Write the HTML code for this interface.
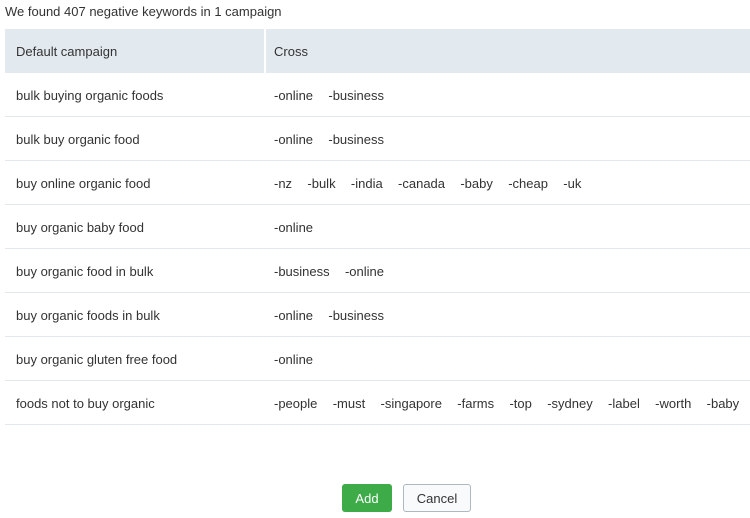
<!DOCTYPE html>
<html><head><style>
body{margin:0;width:750px;height:518px;background:#fff;font-family:"Liberation Sans",sans-serif;font-size:13px;color:#333;position:relative;overflow:hidden}
.t{position:absolute;left:5px;top:4px}
.tbl{position:absolute;left:5px;top:29px;width:745px}
.row{height:43px;border-bottom:1px solid #e2e8ec;position:relative}
.row div{position:absolute;top:1px;line-height:43px;white-space:pre}
.c1{left:11px}.c2{left:269px;word-spacing:1.5px}
.hd{background:#e3eaef;height:44px;border:none}
.hd .sep{position:absolute;left:259px;top:0;width:2px;height:44px;background:#fff}
.btn{position:absolute;top:484px;height:28px;line-height:30px;text-align:center;border-radius:3px;font-size:13px}
</style></head><body>
<div class="t">We found 407 negative keywords in 1 campaign</div>
<div class="tbl">
<div class="row hd"><div class="c1">Default campaign</div><span class="sep"></span><div class="c2">Cross</div></div>
<div class="row"><div class="c1">bulk buying organic foods</div><div class="c2">-online   -business</div></div>
<div class="row"><div class="c1">bulk buy organic food</div><div class="c2">-online   -business</div></div>
<div class="row"><div class="c1">buy online organic food</div><div class="c2">-nz   -bulk   -india   -canada   -baby   -cheap   -uk</div></div>
<div class="row"><div class="c1">buy organic baby food</div><div class="c2">-online</div></div>
<div class="row"><div class="c1">buy organic food in bulk</div><div class="c2">-business   -online</div></div>
<div class="row"><div class="c1">buy organic foods in bulk</div><div class="c2">-online   -business</div></div>
<div class="row"><div class="c1">buy organic gluten free food</div><div class="c2">-online</div></div>
<div class="row"><div class="c1">foods not to buy organic</div><div class="c2">-people   -must   -singapore   -farms   -top   -sydney   -label   -worth   -baby</div></div>
</div>
<div class="btn" style="left:342px;width:50px;background:#3cab48;color:#fff">Add</div>
<div class="btn" style="left:403px;width:66px;border:1px solid #aeb8c0;background:#f8fafb;height:26px;line-height:28px">Cancel</div>
</body></html>
